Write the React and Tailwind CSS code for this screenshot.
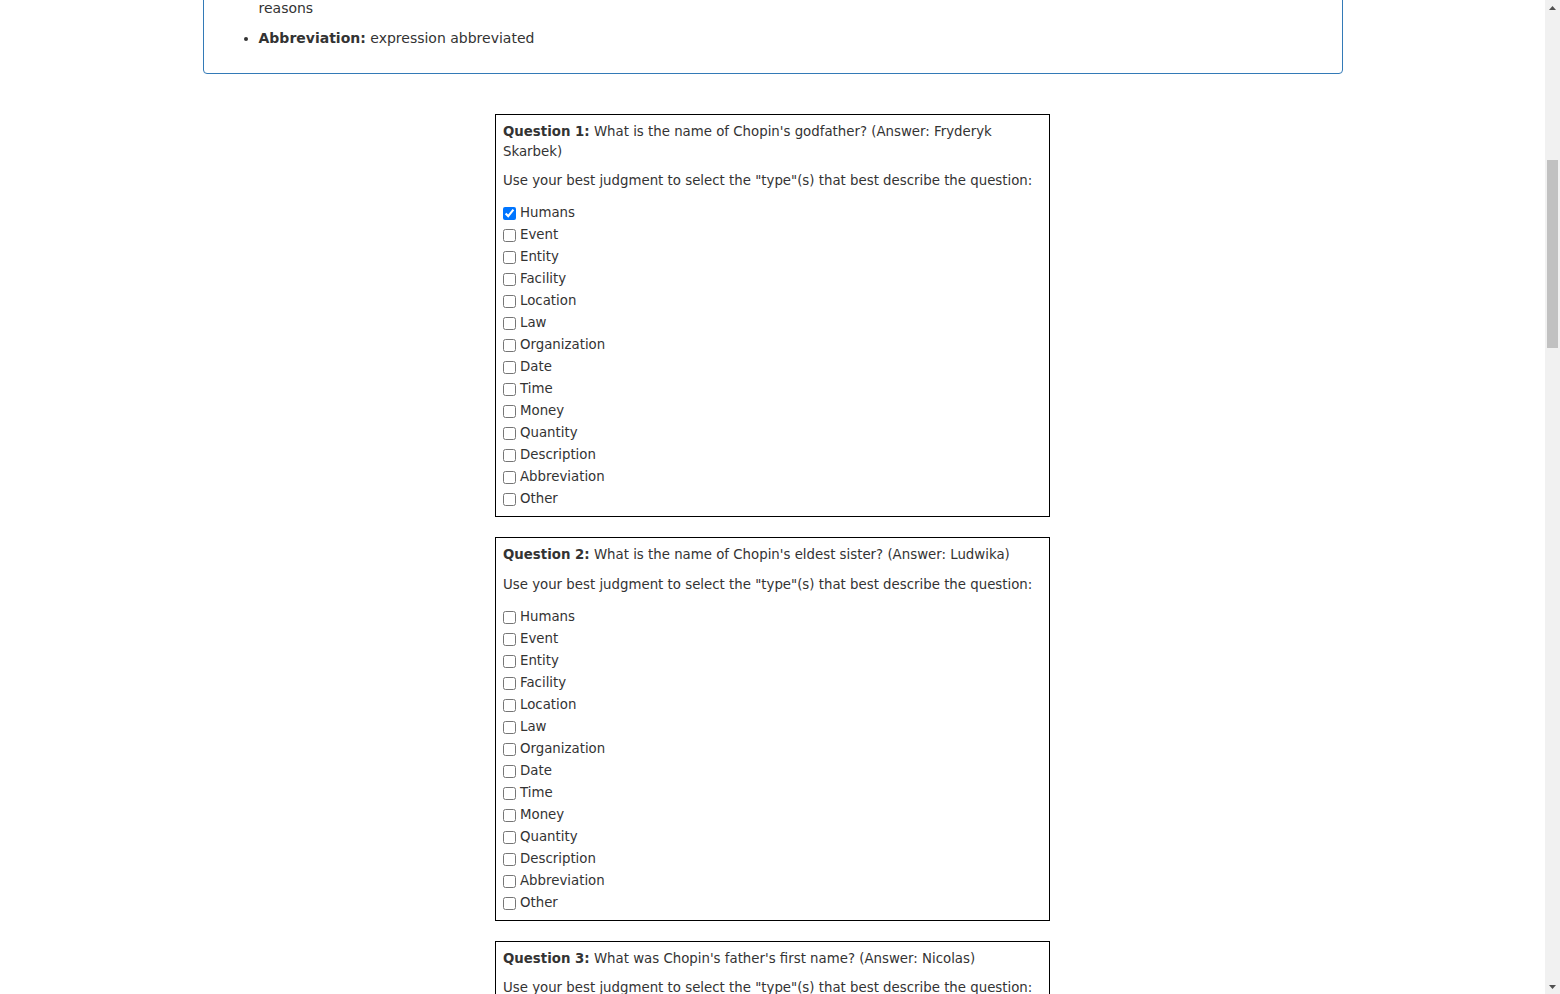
import React, { useLayoutEffect, useRef } from "react";

const TYPES = [
  "Humans",
  "Event",
  "Entity",
  "Facility",
  "Location",
  "Law",
  "Organization",
  "Date",
  "Time",
  "Money",
  "Quantity",
  "Description",
  "Abbreviation",
  "Other",
];

const QUESTIONS = [
  { q: "What is the name of Chopin's godfather?", a: "Fryderyk Skarbek", checked: ["Humans"] },
  { q: "What is the name of Chopin's eldest sister?", a: "Ludwika", checked: [] },
  { q: "What was Chopin's father's first name?", a: "Nicolas", checked: [] },
];

function Question({ index, item, innerRef }) {
  return (
    <div
      ref={innerRef}
      className="mx-auto mb-[20px] w-[555px] border border-black px-[7px] pt-[7px] pb-[7px] text-[13.33px] leading-[19.5px]"
    >
      <p className="mb-[10px]">
        <span className="font-bold">Question {index}:</span> {item.q} (Answer: {item.a})
      </p>
      <p className="mb-[10.5px]">
        Use your best judgment to select the "type"(s) that best describe the question:
      </p>
      <div>
        {TYPES.map((t) => (
          <label key={t} className="flex h-[22px] items-start">
            <input
              type="checkbox"
              name={`q${index}-${t}`}
              defaultChecked={item.checked.includes(t)}
              className="mt-[6px] mr-[4px] h-[13px] w-[13px] shrink-0"
            />
            <span className="pt-[2px] leading-[20px]">{t}</span>
          </label>
        ))}
      </div>
    </div>
  );
}

function ScrollArrow({ down }) {
  return (
    <div className="flex h-[15px] w-[15px] items-center justify-center">
      <svg width="7" height="4" viewBox="0 0 7 4" aria-hidden="true">
        {down ? (
          <polygon points="0,0 7,0 3.5,4" fill="#505050" />
        ) : (
          <polygon points="3.5,0 7,4 0,4" fill="#505050" />
        )}
      </svg>
    </div>
  );
}

export default function App() {
  const scrollRef = useRef(null);
  const q1Ref = useRef(null);

  useLayoutEffect(() => {
    const el = scrollRef.current;
    const q = q1Ref.current;
    if (!el || !q) return;
    const offset =
      q.getBoundingClientRect().top - el.getBoundingClientRect().top + el.scrollTop;
    el.scrollTop = offset - 114;
  }, []);

  return (
    <div className="flex h-screen w-full overflow-hidden bg-white font-['DejaVu_Sans',sans-serif] text-[14px] leading-[20px] text-[#333]">
      <div ref={scrollRef} className="min-w-0 flex-1 overflow-hidden">
        <div className="pt-[20px] pb-[40px]">
          <div className="mx-auto mb-[40px] w-[1140px] rounded-[4px] border border-[#337ab7]">
            <div className="p-[15px]">
              <ul className="list-disc pl-[40px]">
                <li className="mb-[10px]">
                  <span className="font-bold">Description:</span> description and abstract concepts, such as definitions, descriptions of something, the manner of an action, and
                  <br />
                  reasons
                </li>
                <li className="mb-[10px]">
                  <span className="font-bold">Abbreviation:</span> expression abbreviated
                </li>
              </ul>
            </div>
          </div>

          {QUESTIONS.map((item, i) => (
            <Question
              key={i}
              index={i + 1}
              item={item}
              innerRef={i === 0 ? q1Ref : undefined}
            />
          ))}
        </div>
      </div>

      <div className="flex h-full w-[15px] shrink-0 flex-col items-center bg-[#f1f1f1]">
        <ScrollArrow />
        <div className="h-[145px] shrink-0" />
        <div className="h-[188px] w-[11px] shrink-0 bg-[#c1c1c1]" />
        <div className="flex-1" />
        <ScrollArrow down />
      </div>
    </div>
  );
}
